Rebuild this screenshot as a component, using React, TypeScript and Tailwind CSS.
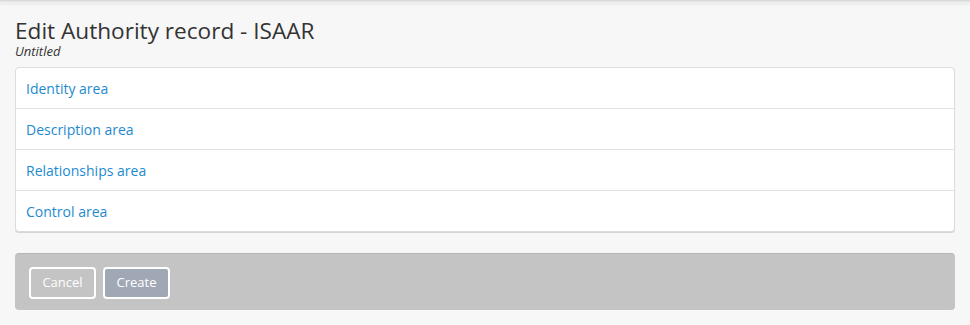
export default function App() {
  const areas = ["Identity area", "Description area", "Relationships area", "Control area"];

  return (
    <div
      className="min-h-[325px] w-full bg-[#f7f7f7] text-[#333]"
      style={{ fontFamily: '"Open Sans", "Liberation Sans", sans-serif' }}
    >
      <div className="h-[3px] w-full bg-gradient-to-b from-[#d4d4d4] to-[#f5f5f5] shadow-[0_1px_3px_rgba(0,0,0,0.08)]" />
      <div className="px-[15px] pt-[16px]">
        <h1 className="text-[22.6px] leading-[24px] text-[#333]">Edit Authority record - ISAAR</h1>
        <p className="mt-[1px] text-[13px] italic leading-[14px] text-[#333]">Untitled</p>

        <div className="mt-[9px] w-[940px] overflow-hidden rounded-[4px] border border-[#dcdcdc] bg-white shadow-[0_1px_0_#d6d6d6]">
          {areas.map((area, i) => (
            <div
              key={area}
              className={`flex items-center px-[10px] ${i > 0 ? "h-[41px] border-t border-[#e2e2e2]" : "h-[40px]"}`}
            >
              <a href="#" className="text-[14px] text-[#1d8ad0]">
                {area}
              </a>
            </div>
          ))}
        </div>

        <div className="mt-[21px] flex h-[57px] w-[940px] items-start gap-[7px] rounded-[4px] border-t border-[#b5b5b5] bg-[#c4c4c4] px-[14px] pt-[13px]">
          <button className="h-[32px] w-[67px] rounded-[4px] border-2 border-white text-[13px] text-white">
            Cancel
          </button>
          <button className="h-[32px] w-[67px] rounded-[4px] border-2 border-white bg-[#a0a8b6] text-[13px] text-white">
            Create
          </button>
        </div>
      </div>
    </div>
  );
}
